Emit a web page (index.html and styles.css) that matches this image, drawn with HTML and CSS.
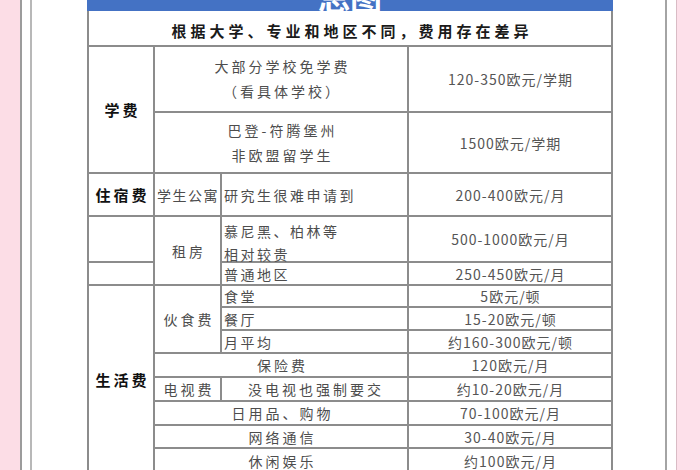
FILE: index.html
```html
<!DOCTYPE html>
<html lang="zh-CN">
<head>
<meta charset="utf-8">
<title>德国留学费用</title>
<link rel="stylesheet" href="styles.css">
</head>
<body>
<div class="page">
  <div class="pink-l"></div>
  <div class="rule rule-a"></div>
  <div class="gutter-l"></div>
  <div class="rule rule-b"></div>
  <main class="sheet">
    <div class="doc">
      <div class="banner"><span class="banner-title">总图</span></div>
      <div class="grid">
        <div class="cell subtitle span4">根据大学、专业和地区不同，费用存在差异</div>

        <div class="cell head rs2">学费</div>
        <div class="cell txt stack span2"><span>大部分学校免学费</span><span>（看具体学校）</span></div>
        <div class="cell val">120-350欧元/学期</div>
        <div class="cell txt stack span2"><span>巴登-符腾堡州</span><span>非欧盟留学生</span></div>
        <div class="cell val">1500欧元/学期</div>

        <div class="cell head">住宿费</div>
        <div class="cell txt tight">学生公寓</div>
        <div class="cell txt left">研究生很难申请到</div>
        <div class="cell val">200-400欧元/月</div>

        <div class="cell"></div>
        <div class="cell txt rs2">租房</div>
        <div class="cell txt left stack-left"><span>慕尼黑、柏林等</span><span>相对较贵</span></div>
        <div class="cell val">500-1000欧元/月</div>
        <div class="cell"></div>
        <div class="cell txt left">普通地区</div>
        <div class="cell val">250-450欧元/月</div>

        <div class="cell head rs8">生活费</div>
        <div class="cell txt rs3">伙食费</div>
        <div class="cell txt left">食堂</div>
        <div class="cell val">5欧元/顿</div>
        <div class="cell txt left">餐厅</div>
        <div class="cell val">15-20欧元/顿</div>
        <div class="cell txt left">月平均</div>
        <div class="cell val">约160-300欧元/顿</div>

        <div class="cell txt span2">保险费</div>
        <div class="cell val">120欧元/月</div>
        <div class="cell txt">电视费</div>
        <div class="cell txt">没电视也强制要交</div>
        <div class="cell val">约10-20欧元/月</div>
        <div class="cell txt span2">日用品、购物</div>
        <div class="cell val">70-100欧元/月</div>
        <div class="cell txt span2">网络通信</div>
        <div class="cell val">30-40欧元/月</div>
        <div class="cell txt span2">休闲娱乐</div>
        <div class="cell val">约100欧元/月</div>
      </div>
    </div>
  </main>
  <div class="rule rule-c"></div>
  <div class="gutter-r"></div>
  <div class="rule rule-d"></div>
  <div class="pink-r"></div>
</div>
</body>
</html>
```

FILE: styles.css
```css
html, body {
  margin: 0;
  padding: 0;
  background: #ffffff;
}

body {
  font-family: "Noto Sans CJK SC", "Noto Sans", sans-serif;
  overflow: hidden;
}

.page {
  display: flex;
  width: 700px;
  height: 470px;
  overflow: hidden;
}

.pink-l {
  width: 20px;
  background: #fcdde6;
}

.pink-r {
  flex: 1;
  background: #fde0ea;
}

.rule {
  width: 2px;
  flex: none;
}

.rule-a { background: #9c9c9c; }
.rule-b { background: #b8b8b8; }
.rule-c { background: #a4a4a4; }
.rule-d { width: 1px; background: #d9bcc5; }

.gutter-l {
  width: 8px;
  background: #ffffff;
}

.gutter-r {
  width: 9px;
  background: #ffffff;
}

.sheet {
  width: 633px;
  flex: none;
  box-sizing: border-box;
  padding-left: 55px;
  background: #ffffff;
}

.doc {
  width: 526px;
}

.banner {
  height: 11px;
  background: #4472c4;
  overflow: hidden;
  text-align: center;
  color: #ffffff;
}

.banner-title {
  display: block;
  font-size: 32px;
  font-weight: 700;
  line-height: 32px;
  margin-top: -20px;
}

.grid {
  display: grid;
  grid-template-columns: 64px 65px 185px 202px;
  grid-template-rows: 34px 64px 59px 41px 44px 21px 20px 21px 21px 22px 22px 22px 21px 23px;
  grid-auto-rows: 22px;
  gap: 2px;
  padding: 0 2px 2px;
  background: #8c8c8c;
}

.cell {
  background: #ffffff;
  display: flex;
  align-items: center;
  justify-content: center;
  white-space: nowrap;
  color: #4d4d4d;
  font-size: 14px;
  min-width: 0;
}

.span2 { grid-column: span 2; }
.span4 { grid-column: span 4; }
.rs2 { grid-row: span 2; }
.rs3 { grid-row: span 3; }
.rs8 { grid-row: span 8; }

.subtitle {
  font-size: 15px;
  font-weight: 700;
  color: #1a1a1a;
  letter-spacing: 4px;
  padding-left: 4px;
  padding-top: 5px;
  box-sizing: border-box;
}

.head {
  font-size: 15px;
  font-weight: 700;
  color: #111111;
  letter-spacing: 3px;
  padding-left: 3px;
}

.txt {
  letter-spacing: 3px;
  padding-left: 3px;
}

.tight {
  letter-spacing: 1.5px;
  padding-left: 2px;
  justify-content: flex-start;
}

.left {
  justify-content: flex-start;
  padding-left: 2px;
  letter-spacing: 2.5px;
}

.stack {
  flex-direction: column;
  line-height: 25px;
}

.stack-left {
  flex-direction: column;
  align-items: flex-start;
  justify-content: flex-start;
  line-height: 23px;
  padding-top: 3px;
  box-sizing: border-box;
}

.val {
  color: #555555;
  letter-spacing: 1px;
  padding-left: 1px;
}
```
